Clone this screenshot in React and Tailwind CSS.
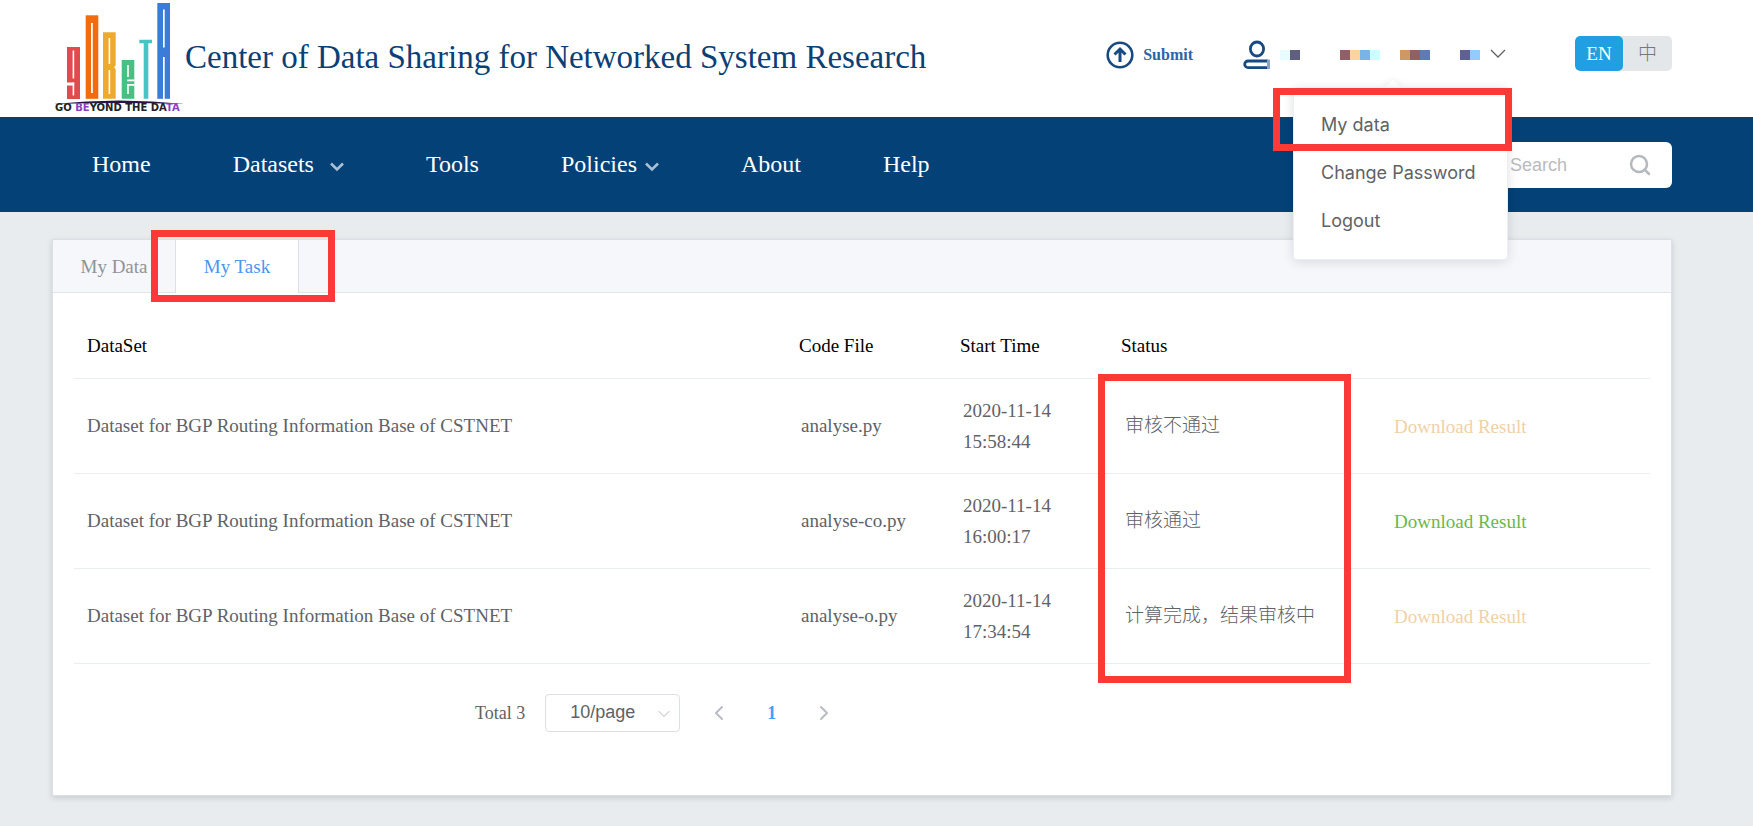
import { useState } from 'react'
import { ChevronDown, ChevronLeft, ChevronRight, Search } from 'lucide-react'

const navItems = [
  { label: 'Home' },
  { label: 'Datasets', arrow: true, gap: 'gap-4' },
  { label: 'Tools' },
  { label: 'Policies', arrow: true, gap: 'gap-2' },
  { label: 'About' },
  { label: 'Help' },
]

const tasks = [
  { id: 1, dataset: 'Dataset for BGP Routing Information Base of CSTNET', file: 'analyse.py', date: '2020-11-14', time: '15:58:44', status: '审核不通过', ready: false },
  { id: 2, dataset: 'Dataset for BGP Routing Information Base of CSTNET', file: 'analyse-co.py', date: '2020-11-14', time: '16:00:17', status: '审核通过', ready: true },
  { id: 3, dataset: 'Dataset for BGP Routing Information Base of CSTNET', file: 'analyse-o.py', date: '2020-11-14', time: '17:34:54', status: '计算完成，结果审核中', ready: false },
]

// user name is masked with coloured blocks
const maskGroups = [
  { id: 'a', box: 'ml-[10px]', blocks: ['bg-[#e6fcff]', 'bg-[#5f6080]'] },
  { id: 'b', box: 'ml-10', blocks: ['bg-[#925f66]', 'bg-[#ffd3a0]', 'bg-[#7ab3e6]', 'bg-[#ccffff]'] },
  { id: 'c', box: 'ml-5', blocks: ['bg-[#cc9866]', 'bg-[#925f66]', 'bg-[#5f7bb5]'] },
  { id: 'd', box: 'ml-[30px]', blocks: ['bg-[#5f6096]', 'bg-[#94caff]'] },
]

function Logo() {
  return (
    <svg width="132" height="117" viewBox="0 0 132 117" className="shrink-0" role="img" aria-label="Gobeta">
      <rect x="14" y="47" width="13" height="52" fill="#e04b4b" />
      <g fill="#fff">
        <rect x="19.6" y="50.5" width="1.6" height="28" />
        <rect x="14" y="82.5" width="7.2" height="3" />
        <rect x="19.6" y="82.5" width="1.6" height="13" />
      </g>
      <rect x="32.7" y="15.3" width="12.6" height="83.5" fill="#f26c0d" />
      <rect x="38" y="23" width="1.8" height="70" fill="#fff" />
      <path d="M50 32.3h12.7v33l-1.6 2 1.6 2v29.5H50z" fill="#edab2d" />
      <rect x="55.6" y="38" width="1.6" height="26" fill="#fff" />
      <rect x="55.6" y="70" width="1.6" height="24" fill="#fff" />
      <rect x="68.7" y="60" width="12.6" height="38.8" fill="#48bf83" />
      <g fill="#fff">
        <rect x="74.2" y="65" width="1.6" height="12" />
        <rect x="74.2" y="79.5" width="7.2" height="1.8" />
        <rect x="74.2" y="84" width="7.2" height="1.8" />
        <rect x="74.2" y="84" width="1.6" height="10" />
      </g>
      <path d="M86.3 39.7H99v3.6h-3.7v55.5h-4.6V43.3h-4.4z" fill="#47c4c4" />
      <rect x="104.3" y="3" width="12.7" height="95.8" fill="#3b7cd8" />
      <rect x="110" y="9.5" width="1.7" height="38" fill="#fff" />
      <rect x="110" y="57" width="1.7" height="42" fill="#fff" />
      <path d="M0 104Q66 97 132 104Q66 102 0 104Z" fill="#2a1546" />
      <text x="2" y="111" fontFamily="DejaVu Sans" fontWeight="700" fontSize="10" fill="#222">
        GO <tspan fill="#8a3fc0">BE</tspan>YOND THE DA<tspan fill="#8a3fc0">TA</tspan>
      </text>
    </svg>
  )
}

function SubmitIcon() {
  return (
    <svg width="28" height="28" viewBox="0 0 28 28" fill="none" stroke="#164a80" strokeWidth="2.6">
      <circle cx="14" cy="14" r="12.3" />
      <path d="M14 21V8.500M8.500 13.500L14 8l5.500 5.500" strokeWidth="3" />
    </svg>
  )
}

function UserIcon() {
  return (
    <svg width="27" height="30" viewBox="0 0 27 30" fill="none" stroke="#164a80" strokeWidth="2.8">
      <ellipse cx="14" cy="9" rx="6.6" ry="7" />
      <path d="M25 21H5a3.300 3.300 0 0 0 0 6.600H25" />
      <path d="M25.500 19.600v9.400" stroke="#8ba4bf" strokeWidth="3" />
    </svg>
  )
}

function UserMenu() {
  return (
    <div className="absolute top-[87px] -right-[2px] z-20 w-[215px]">
      <div className="absolute -top-[5px] left-[94px] h-3 w-3 rotate-45 bg-white shadow-[0_0_8px_rgba(0,0,0,0.08)]" />
      <ul className="relative rounded border border-[#ebeef5] bg-white pt-[13px] pb-[14px] font-[Inter,sans-serif] text-lg leading-[48px] whitespace-nowrap text-[#606266] shadow-[0_2px_12px_rgba(0,0,0,0.12)]">
        <li><a href="#my-data" className="block px-[27px]">My data</a></li>
        <li><a href="#password" className="block px-[27px]">Change Password</a></li>
        <li><a href="#logout" className="block px-[27px]">Logout</a></li>
      </ul>
      <div className="pointer-events-none absolute top-px -right-1 -left-[20px] h-[63px] border-[7px] border-[#fb3a38]" />
    </div>
  )
}

function App() {
  const [tab, setTab] = useState('task')

  return (
    <div className="min-h-screen bg-[#e8ecef] font-['Liberation_Serif','Noto_Sans_CJK_SC',serif] text-[19px]">
      <header className="flex h-[117px] bg-white pr-[81px] pl-[53px]">
        <Logo />
        <h1 className="mb-[2px] flex-1 self-center text-[33px] leading-none whitespace-nowrap text-[#0b4075]">
          Center of Data Sharing for Networked System Research
        </h1>

        <a href="#submit" className="mb-[8px] flex items-center gap-[9px] text-base font-bold text-[#2a66a5]">
          <SubmitIcon />
          Submit
        </a>

        <div className="relative ml-[50px] flex">
          <button type="button" aria-label="User menu" className="mb-[8px] flex items-center">
            <UserIcon />
            {maskGroups.map(group => (
              <span key={group.id} className={`flex ${group.box}`}>
                {group.blocks.map(color => (
                  <span key={color} className={`h-[10px] w-[10px] ${color}`} />
                ))}
              </span>
            ))}
            <svg className="mb-[2px] ml-[10px]" width="16" height="10" viewBox="0 0 16 10" fill="none" stroke="#606266" strokeWidth="1.3">
              <path d="M1 1l7 7 7-7" />
            </svg>
          </button>
          <UserMenu />
        </div>

        <div className="mt-9 ml-[69px] flex h-[35px] overflow-hidden rounded-[5px] bg-[#e4e7ea]">
          <button type="button" className="w-12 rounded-[5px] bg-[#209fe2] pt-[2px] text-white">EN</button>
          <button type="button" className="w-[49px] pt-[2px] font-light text-[#777]">中</button>
        </div>
      </header>

      <nav className="flex h-[95px] items-center bg-[#044176] pr-[81px] pl-[92px] text-2xl text-white">
        <ul className="flex flex-1 gap-[82px] pb-[2px]">
          {navItems.map(item => (
            <li key={item.label}>
              <a href={`#${item.label.toLowerCase()}`} className={`flex items-center ${item.gap || ''}`}>
                {item.label}
                {item.arrow && (
                  <svg className="mt-[6px]" width="14" height="10" viewBox="0 0 14 10" fill="none" stroke="#a9bfd4" strokeWidth="2.6">
                    <path d="M1 1.500l6 6 6-6" />
                  </svg>
                )}
              </a>
            </li>
          ))}
        </ul>
        <div className="flex h-[46px] w-[300px] items-center rounded-md bg-white pr-5 pl-[138px] font-['Liberation_Sans',sans-serif] text-lg">
          <input type="search" aria-label="Search" placeholder="Search" className="min-w-0 flex-1 text-gray-600 outline-none placeholder:text-[#b9bbbe]" />
          <Search size={24} strokeWidth={2.5} className="text-[#b4b9be]" />
        </div>
      </nav>

      <main className="pt-[27px] pr-[81px] pb-[30px] pl-[52px]">
        <div className="border border-[#dcdfe6] bg-white pb-[63px] shadow-[0_2px_6px_rgba(0,0,0,0.14)]">
          <div role="tablist" className="relative flex h-[53px] border-b border-[#dfe4ed] bg-[#f5f7fa]">
            <button type="button" role="tab" aria-selected={tab === 'data'} onClick={() => setTab('data')} className="w-[122px] pt-[2px] text-[#909399]">
              My Data
            </button>
            <button type="button" role="tab" aria-selected={tab === 'task'} onClick={() => setTab('task')} className="-mb-px w-[124px] border-x border-[#dcdfe6] bg-white pt-[2px] text-[#4a97ee]">
              My Task
            </button>
            <div className="pointer-events-none absolute -top-[10px] left-[98px] h-[72px] w-[184px] border-[7px] border-[#fb3a38]" />
          </div>

          <div className="relative mx-[21px] pt-[21px]">
            <table className="w-full table-fixed border-collapse text-left text-[#606266]">
              <colgroup>
                <col />
                <col className="w-[161px]" />
                <col className="w-[162px]" />
                <col className="w-[271px]" />
                <col className="w-[270px]" />
              </colgroup>
              <thead>
                <tr className="h-[64px] border-b border-[#ebeef0] text-black">
                  <th className="pl-[13px] font-normal">DataSet</th>
                  <th className="pl-[13px] font-normal">Code File</th>
                  <th className="pl-[13px] font-normal">Start Time</th>
                  <th className="pl-[12px] font-normal">Status</th>
                  <th aria-label="Result" />
                </tr>
              </thead>
              <tbody>
                {tasks.map(task => (
                  <tr key={task.id} className="h-[95px] border-b border-[#ebeef0]">
                    <td className="pt-[2px] pl-[13px]">{task.dataset}</td>
                    <td className="pt-[2px] pl-[15px]">{task.file}</td>
                    <td className="pl-4 leading-[31px]">
                      {task.date}<br />{task.time}
                    </td>
                    <td className="pt-[2px] pl-4 font-light text-[#606266]">{task.status}</td>
                    <td className="pt-1 pl-[14px]">
                      <button type="button" className={task.ready ? 'text-[#67b94a]' : 'text-[#f0d1a5]'}>
                        Download Result
                      </button>
                    </td>
                  </tr>
                ))}
              </tbody>
            </table>
            <div className="pointer-events-none absolute right-[299px] -bottom-[19px] h-[309px] w-[253px] border-[7px] border-[#fb3a38]" />
          </div>

          <div className="mt-[30px] flex h-[38px] items-center pl-[422px] text-[#606266]">
            <span className="text-lg">Total 3</span>
            <div className="relative ml-5 h-full w-[135px]">
              <select aria-label="Page size" className="h-full w-full appearance-none rounded border border-[#dcdfe6] bg-white pb-[2px] pl-6 font-['Liberation_Sans',sans-serif] text-lg">
                <option>10/page</option>
                <option>20/page</option>
              </select>
              <ChevronDown size={20} strokeWidth={1.2} className="pointer-events-none absolute top-[10px] right-[6px] text-[#b4b8c0]" />
            </div>
            <button type="button" aria-label="Previous page" className="ml-[27px] text-[#b9bcc4]">
              <ChevronLeft size={24} strokeWidth={2} />
            </button>
            <button type="button" className="mx-9 text-lg font-bold text-[#409eff]">1</button>
            <button type="button" aria-label="Next page" className="text-[#b9bcc4]">
              <ChevronRight size={24} strokeWidth={2} />
            </button>
          </div>
        </div>
      </main>
    </div>
  )
}

export default App
